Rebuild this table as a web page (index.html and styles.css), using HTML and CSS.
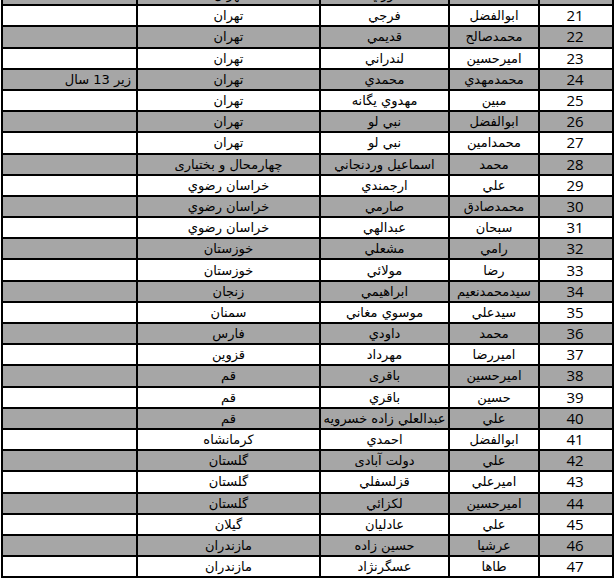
FILE: index.html
```html
<!DOCTYPE html>
<html lang="fa">
<head>
<meta charset="utf-8">
<link rel="stylesheet" href="styles.css">
</head>
<body>
<div class="sheet">
<table class="list" dir="rtl">
<colgroup><col class="c-num"><col class="c-first"><col class="c-last"><col class="c-prov"><col class="c-note"></colgroup>
<tbody>
<tr class="g"><td class="num">20</td><td>محمد</td><td>نوري</td><td>تهران</td><td></td></tr>
<tr><td class="num">21</td><td>ابوالفضل</td><td>فرجي</td><td>تهران</td><td></td></tr>
<tr class="g"><td class="num">22</td><td>محمدصالح</td><td>قديمي</td><td>تهران</td><td></td></tr>
<tr><td class="num">23</td><td>اميرحسين</td><td>لندراني</td><td>تهران</td><td></td></tr>
<tr class="g"><td class="num">24</td><td>محمدمهدي</td><td>محمدي</td><td>تهران</td><td class="note">زیر 13 سال</td></tr>
<tr><td class="num">25</td><td>مبين</td><td>مهدوي يگانه</td><td>تهران</td><td></td></tr>
<tr class="g"><td class="num">26</td><td>ابوالفضل</td><td>نبي لو</td><td>تهران</td><td></td></tr>
<tr><td class="num">27</td><td>محمدامين</td><td>نبي لو</td><td>تهران</td><td></td></tr>
<tr class="g"><td class="num">28</td><td>محمد</td><td>اسماعيل وردنجاني</td><td>چهارمحال و بختياری</td><td></td></tr>
<tr><td class="num">29</td><td>علي</td><td>ارجمندي</td><td>خراسان رضوي</td><td></td></tr>
<tr class="g"><td class="num">30</td><td>محمدصادق</td><td>صارمي</td><td>خراسان رضوي</td><td></td></tr>
<tr><td class="num">31</td><td>سبحان</td><td>عبدالهي</td><td>خراسان رضوي</td><td></td></tr>
<tr class="g"><td class="num">32</td><td>رامي</td><td>مشعلي</td><td>خوزستان</td><td></td></tr>
<tr><td class="num">33</td><td>رضا</td><td>مولائي</td><td>خوزستان</td><td></td></tr>
<tr class="g"><td class="num">34</td><td>سيدمحمدنعيم</td><td>ابراهيمي</td><td>زنجان</td><td></td></tr>
<tr><td class="num">35</td><td>سيدعلي</td><td>موسوي مغاني</td><td>سمنان</td><td></td></tr>
<tr class="g"><td class="num">36</td><td>محمد</td><td>داودي</td><td>فارس</td><td></td></tr>
<tr><td class="num">37</td><td>اميررضا</td><td>مهرداد</td><td>قزوين</td><td></td></tr>
<tr class="g"><td class="num">38</td><td>اميرحسين</td><td>باقری</td><td>قم</td><td></td></tr>
<tr><td class="num">39</td><td>حسين</td><td>باقري</td><td>قم</td><td></td></tr>
<tr class="g"><td class="num">40</td><td>علي</td><td>عبدالعلي زاده خسرويه</td><td>قم</td><td></td></tr>
<tr><td class="num">41</td><td>ابوالفضل</td><td>احمدي</td><td>كرمانشاه</td><td></td></tr>
<tr class="g"><td class="num">42</td><td>علي</td><td>دولت آبادی</td><td>گلستان</td><td></td></tr>
<tr><td class="num">43</td><td>اميرعلي</td><td>قزلسفلي</td><td>گلستان</td><td></td></tr>
<tr class="g"><td class="num">44</td><td>اميرحسين</td><td>لكزائي</td><td>گلستان</td><td></td></tr>
<tr><td class="num">45</td><td>علي</td><td>عادليان</td><td>گيلان</td><td></td></tr>
<tr class="g"><td class="num">46</td><td>عرشيا</td><td>حسين زاده</td><td>مازندران</td><td></td></tr>
<tr><td class="num">47</td><td>طاها</td><td>عسگرنژاد</td><td>مازندران</td><td></td></tr>
</tbody>
</table>
</div>
</body>
</html>
```

FILE: styles.css
```css
html, body {
  margin: 0;
  padding: 0;
  background: #ffffff;
}
.sheet {
  width: 616px;
  height: 584px;
  overflow: hidden;
  padding-left: 1px;
  box-sizing: border-box;
}
.list {
  margin-top: -17px;
  width: 611px;
  border-collapse: collapse;
  table-layout: fixed;
  font-family: "DejaVu Sans", sans-serif;
  font-size: 13px;
  color: #000;
}
.c-num { width: 74px; }
.c-first { width: 90px; }
.c-last { width: 129px; }
.c-prov { width: 183px; }
.c-note { width: 135px; }
.list td {
  height: 19.2px;
  padding: 0 2px;
  border: 2px solid #000;
  text-align: center;
  vertical-align: middle;
  white-space: nowrap;
  overflow: hidden;
  line-height: 17px;
}
.list tr.g td {
  background: #a6a6a6;
}
.list td.num {
  font-family: "Open Sans", "Liberation Sans", sans-serif;
  font-size: 15px;
  text-align: center;
  padding-right: 4px;
}
.list td.note {
  text-align: right;
  padding-right: 5px;
}
```
